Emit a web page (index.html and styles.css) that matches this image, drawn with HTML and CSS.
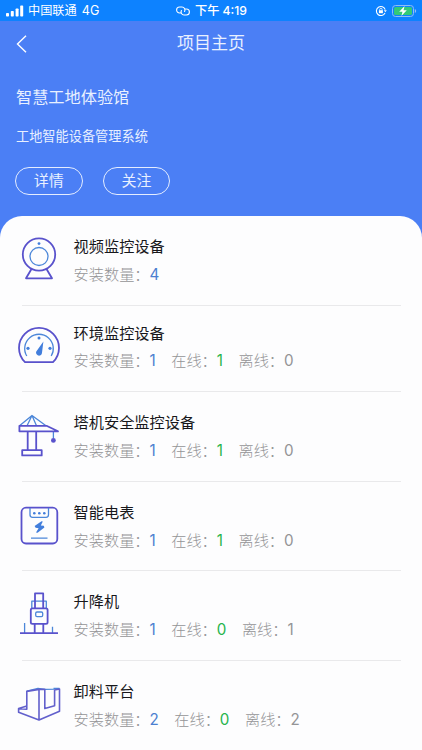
FILE: index.html
```
<!DOCTYPE html>
<html lang="zh-CN">
<head>
<meta charset="utf-8">
<title>项目主页</title>
<link rel="stylesheet" href="styles.css">
</head>
<body>
<div class="status">
  <div class="status-left">
    <svg width="18" height="12" viewBox="0 0 18 12" fill="#fff"><rect x="0" y="8" width="3" height="3.5" rx=".8"/><rect x="4.8" y="6" width="3" height="5.5" rx=".8"/><rect x="9.6" y="3.5" width="3" height="8" rx=".8"/><rect x="14.2" y="0.6" width="3" height="10.9" rx=".8"/></svg>
    <span class="carrier">中国联通</span><span class="network">4G</span>
  </div>
  <div class="status-mid">
    <svg width="14" height="10" viewBox="0 0 14 10" fill="none" stroke="#fff" stroke-width="1.1" stroke-linecap="round"><path d="M5.2 7H3.6a3 3 0 0 1 0-6H6a3 3 0 0 1 2.6 4.4M8.8 3h1.6a3 3 0 0 1 0 6H8a3 3 0 0 1-2.6-4.4"/></svg>
    <span>下午 4:19</span>
  </div>
  <div class="status-right">
    <svg width="12" height="12" viewBox="0 0 12 12" fill="none" stroke="#fff" stroke-width="1.1"><path d="M10 7.9A4.5 4.5 0 1 1 10.2 4.7"/><path d="M8.8 5.2h3l-1.5 2z" fill="#fff" stroke="none"/><rect x="3.9" y="5.2" width="4" height="3" fill="#fff" stroke="none"/><path d="M4.7 5.3V4.5a1.2 1.2 0 0 1 2.4 0v.8" stroke-width=".8"/></svg>
    <svg width="25" height="12" viewBox="0 0 25 12"><rect x=".5" y=".5" width="21" height="11" rx="3" fill="none" stroke="#8fbdf5"/><rect x="2" y="2" width="18" height="8" rx="1.6" fill="#34c978"/><path d="M22.8 4v4q1.4-.6 1.4-2t-1.4-2z" fill="#8fbdf5"/><path d="M12.6 1 7.2 6.7h3.3L9.4 11l5.4-5.7h-3.3z" fill="#fff"/></svg>
  </div>
</div>
<header class="hero">
  <nav class="nav">
    <svg class="back" width="12" height="18" viewBox="0 0 12 18" fill="none" stroke="#fff" stroke-width="1.4"><path d="M10 .8 1.5 9 10 17.2"/></svg>
    <h1>项目主页</h1>
  </nav>
  <h2>智慧工地体验馆</h2>
  <p class="subtitle">工地智能设备管理系统</p>
  <div class="actions"><button>详情</button><button>关注</button></div>
</header>
<main class="list">
  <section class="item first">
    <svg class="icon" viewBox="0 0 44 44"><circle class="p" cx="22" cy="17.5" r="16.2"/><circle class="b" cx="22" cy="19.5" r="9"/><circle class="dot" cx="22" cy="6.6" r="1.4"/><path class="p" d="M14.5 32 9 41.3h26L29.5 32"/></svg>
    <div><h3>视频监控设备</h3><p class="meta"><span>安装数量：<b class="total">4</b></span></p></div>
  </section>
  <section class="item">
    <svg class="icon" viewBox="0 0 44 44"><path class="p" d="M8 39.2A20 20 0 1 1 36 39.2Z"/><path class="b" d="M9.8 33A14.3 14.3 0 1 1 34.2 33"/><circle class="dot" cx="22" cy="15" r="1.5"/><circle class="dot" cx="11" cy="25.3" r="1.6"/><circle class="dot" cx="33" cy="25.3" r="1.6"/><path class="dot" d="M26.4 18.5 25 29.7a3 3 0 1 1-5-2.3z"/></svg>
    <div><h3>环境监控设备</h3><p class="meta"><span>安装数量：<b class="total">1</b></span><span>在线：<b class="online">1</b></span><span>离线：<b>0</b></span></p></div>
  </section>
  <section class="item">
    <svg class="icon" viewBox="0 0 44 44"><path class="b" d="M2.5 12.7 15 2.5 29 12.7M15 2.5 10 12.7M15 2.5 19.5 12.7M36.4 18v7"/><path class="p" d="M2.4 12.8H29.5L41 18.3H2.4ZM10.7 18.4v18.8M19.2 18.4v18.8M5.2 37.2h19.5v5.2H5.2Z"/><circle class="pd" cx="36.4" cy="27.4" r="2.4"/></svg>
    <div><h3>塔机安全监控设备</h3><p class="meta"><span>安装数量：<b class="total">1</b></span><span>在线：<b class="online">1</b></span><span>离线：<b>0</b></span></p></div>
  </section>
  <section class="item">
    <svg class="icon" viewBox="0 0 44 44"><rect class="p" x="4.5" y="4.7" width="35.8" height="35.8" rx="4.5"/><path class="b" d="M13 5v6.8q0 2.5 2.5 2.5H29q2.5 0 2.5-2.5V5M14 35.2h16.5"/><circle class="dot" cx="17.3" cy="10.2" r="1.3"/><circle class="dot" cx="22.3" cy="10.2" r="1.3"/><circle class="dot" cx="27.3" cy="10.2" r="1.3"/><path class="dot" d="M24.5 18.2 17.6 23l1 1.8 3 .5-2.6 4.3 1.6.2 6.8-5.2-.6-1.8-3-.4 2-4z"/></svg>
    <div><h3>智能电表</h3><p class="meta"><span>安装数量：<b class="total">1</b></span><span>在线：<b class="online">1</b></span><span>离线：<b>0</b></span></p></div>
  </section>
  <section class="item">
    <svg class="icon" viewBox="0 0 44 44"><path class="b" d="M14.8 16V9.2h14.5V16M7.6 41V31M35.5 41v-6.2"/><rect class="b" x="18.7" y="20" width="7" height="4.6" rx="1.3"/><path class="p" d="M18 16V1.4h8.2V16M17.7 32v8.6M26.3 32v8.6M3 41.2h38"/><rect class="p" x="13.8" y="16.4" width="16.8" height="15.4" rx="1.6"/></svg>
    <div><h3>升降机</h3><p class="meta"><span>安装数量：<b class="total">1</b></span><span>在线：<b class="online">0</b></span><span>离线：<b>1</b></span></p></div>
  </section>
  <section class="item last">
    <svg class="icon" viewBox="0 0 44 44"><path class="b" d="M9.8 9.2 21 6.4l6.8 1M28 7.4l9.6-.2M36.5 6.4h6"/><path class="platform" d="M9.8 9.4 22 7.4h5.8v19.2l9.8-2.8V8l4.9-1V29.2L22 38 1.6 30.2v-3.8l8.2-2.4ZM1.6 26.6l8.2.6v-4M22 7.4V38"/></svg>
    <div><h3>卸料平台</h3><p class="meta"><span>安装数量：<b class="total">2</b></span><span>在线：<b class="online">0</b></span><span>离线：<b>2</b></span></p></div>
  </section>
</main>
</body>
</html>
```

FILE: styles.css
```
* { box-sizing: border-box; margin: 0; padding: 0; }
body {
  width: 422px; height: 750px; overflow: hidden;
  background: #4b7ff5;
  font-family: Inter, "Noto Sans CJK SC", sans-serif;
  font-weight: 400;
}
h1, h2, h3, b { font-weight: inherit; }
svg { display: block; flex: none; }
.status {
  display: grid; grid-template-columns: 1fr auto 1fr; align-items: center;
  height: 21px; padding: 0 5px 0 6px;
  background: #0d82ff; color: #fff; font-size: 12.2px; line-height: 20px;
}
.status-left, .status-mid, .status-right { display: flex; align-items: center; }
.status-left { gap: 4px; }
.network { margin-left: 1px; font-size: 12.6px; }
.status-mid { gap: 5px; font-weight: 500; }
.status-right { justify-content: flex-end; gap: 5px; }
.hero { height: 195px; color: #e8f0ff; }
.nav { display: grid; grid-template-columns: 40px 1fr 40px; align-items: center; height: 45px; }
.back { margin-left: 16px; }
.nav h1 { padding-bottom: 1px; font-size: 17px; line-height: 24px; text-align: center; }
.hero h2 { margin: 19px 0 0 16px; font-size: 16.2px; line-height: 24px; }
.subtitle { margin: 17px 0 0 16px; font-size: 13.2px; line-height: 20px; }
.actions { display: flex; gap: 20px; margin: 21px 0 0 15px; }
.actions button {
  width: 67.7px; height: 28px; border: 1px solid #e4edff; border-radius: 14px;
  background: none; color: inherit; font: inherit; font-size: 15px; line-height: 24px;
}
.list { height: 534px; padding: 0 21px 0 22px; background: #fdfdfe; border-radius: 22px 22px 0 0; }
.item {
  display: grid; grid-template-columns: 51.6px 1fr; height: 89.6px; padding-top: 19px;
  border-bottom: 1px solid #e9e9eb;
}
.first { padding-top: 19px; }
.item:nth-child(2) { height: 86.6px; padding-top: 16px; }
.last { border-bottom: 0; }
.icon { width: 44px; height: 44px; margin: 1.8px 0 0 -5px; fill: none; stroke-linejoin: round; }
.first .icon { margin-top: 2.2px; }
.item h3 { font-size: 15.2px; line-height: 24px; color: #17171b; }
.meta {
  display: flex; gap: 15px; margin-top: 3.8px;
  color: #949496; font-size: 15.2px; font-weight: 300; line-height: 24px; white-space: nowrap;
}
.meta b { font-weight: 400; letter-spacing: .5px; }
.meta .total { color: #4b7fd0; }
.meta .online { color: #27b44c; }
.p { stroke: #5952cc; stroke-width: 1.8; }
.b { stroke: #4c87d9; stroke-width: 1.3; }
.dot { fill: #427edc; }
.pd { fill: #5952cc; }
.platform { stroke: #6260cc; stroke-width: 1.6; }
```
